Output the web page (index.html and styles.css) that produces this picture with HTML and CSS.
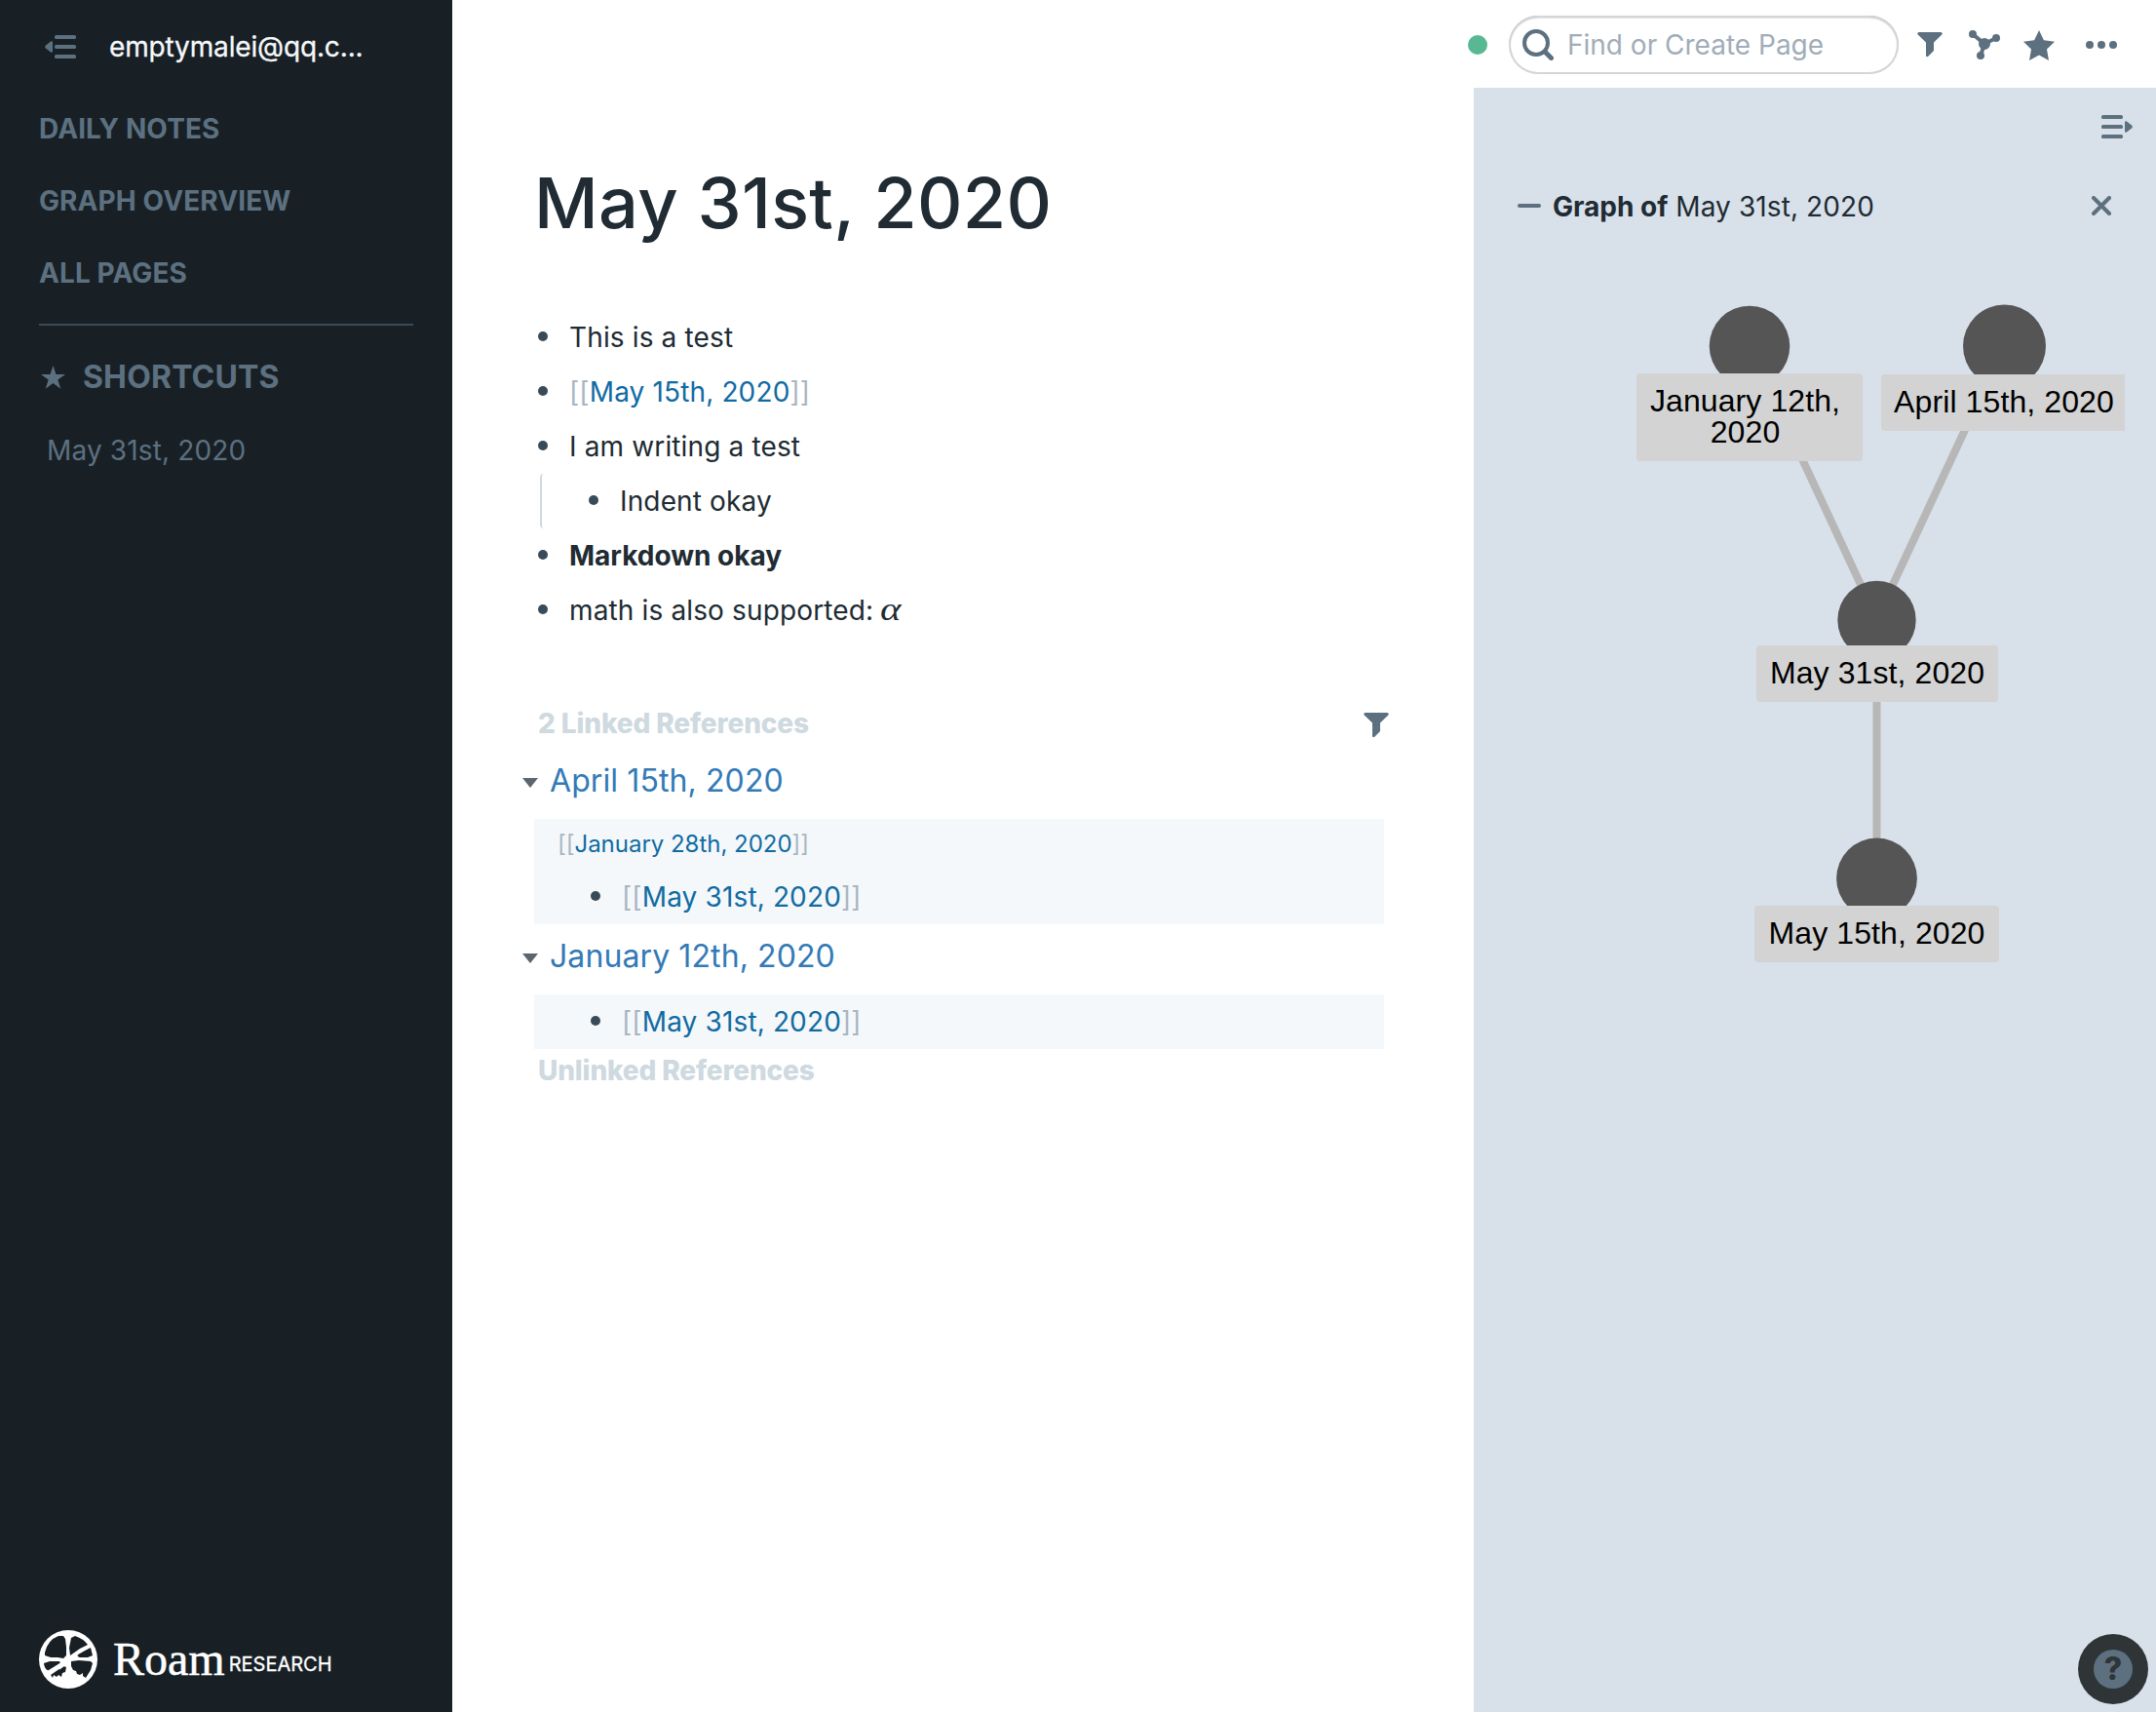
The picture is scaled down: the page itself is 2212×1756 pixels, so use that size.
FILE: index.html
```html
<!DOCTYPE html>
<html lang="en">
<head>
<meta charset="utf-8">
<title>May 31st, 2020</title>
<link rel="stylesheet" href="styles.css">
</head>
<body>
<div class="app">
  <nav class="sidebar">
    <header class="account">
      <svg class="menu-icon" width="32" height="24" viewBox="0 0 32 24"><rect x="10" y="0" width="22" height="4" rx="1.6"/><rect x="10" y="10" width="22" height="4" rx="1.6"/><rect x="10" y="20" width="22" height="4" rx="1.6"/><path d="M8 7.500v9q0 2-2 1L.7 13.200q-1-1.200 0-2.400L6 6.500q2-1 2 1z"/></svg>
      <span class="account-name">emptymalei@qq.c...</span>
    </header>
    <a class="nav-link">DAILY NOTES</a>
    <a class="nav-link">GRAPH OVERVIEW</a>
    <a class="nav-link">ALL PAGES</a>
    <hr class="divider">
    <div class="shortcuts">
      <svg width="25" height="24" viewBox="0 0 25 24"><path d="M12.500 0l3 9H25l-7.700 5.500 3 9.200-7.800-5.700-7.800 5.700 3-9.200L0 9h9.500z"/></svg>
      <span>SHORTCUTS</span>
    </div>
    <a class="shortcut">May 31st, 2020</a>
    <footer class="brand">
      <svg class="brand-mark" width="60" height="60" viewBox="0 0 60 60">
        <circle cx="30" cy="30" r="30" fill="#fff"/>
        <g fill="#182026">
          <path d="M6 23Q9 10 20 6l5 0 2 3 1 8v9l-3 3-6-1-7 0-6-2z"/>
          <path d="M33 8l4-2Q46 9 50 15l-8 4-10 7-1-8z"/>
          <path d="M53 18l2 8-5 2-8 0-5-2z"/>
          <path d="M5 34l6-2 10 0 1 2-12 8Q5 39 5 34z"/>
          <path d="M33 32l8-1 12 1 2 2-2 7-5 8-3-2 0-3-3 2-3-1-1-3-3-1-2-4z"/>
          <path d="M12 46l13-9 3 1-1 5-3 1-1 4-3-2-2 2-3-2-1 3z"/>
        </g>
        <path d="M9 43L51 17" stroke="#fff" stroke-width="2.500"/>
        <path d="M20 39L39 25" stroke="#fff" stroke-width="4"/>
      </svg>
      <span class="brand-name">Roam</span><span class="brand-sub">RESEARCH</span>
    </footer>
  </nav>
  <div class="workspace">
    <header class="topbar">
      <span class="sync-dot"></span>
      <label class="search">
        <svg width="32" height="32" viewBox="0 0 32 32"><circle cx="14" cy="14" r="12" fill="none" stroke="#5c7080" stroke-width="4"/><path d="M23.500 23.500l6 6" stroke="#5c7080" stroke-width="5" stroke-linecap="round"/></svg>
        <span>Find or Create Page</span>
      </label>
      <svg class="tool tool-filter" width="26" height="26" viewBox="0 0 26 26"><path d="M1.500 0h23q2 1 .8 2.500L17 10.500V19l-6 6q-2 .6-2-1V10.500L.7 2.500Q-.5 1 1.500 0z"/></svg>
      <svg class="tool tool-graph" width="32" height="30" viewBox="0 0 32 30"><path d="M4 4l12 10 12-6M16 14l-4 12" fill="none" stroke="#5c7080" stroke-width="4"/><circle cx="4" cy="4" r="4"/><circle cx="28" cy="8" r="4"/><circle cx="12" cy="26" r="4"/><circle cx="16" cy="14" r="6"/></svg>
      <svg class="tool tool-star" width="32" height="31" viewBox="0 0 32 31"><path d="M16 0l4.900 10.200L32 11.800l-8 7.800L26 31l-10-5.400L6 31l2-11.400-8-7.800 11.100-1.600z"/></svg>
      <svg class="tool" width="32" height="8" viewBox="0 0 32 8"><circle cx="4" cy="4" r="4"/><circle cx="16" cy="4" r="4"/><circle cx="28" cy="4" r="4"/></svg>
    </header>
    <div class="panes">
      <main class="page">
        <h1>May 31st, 2020</h1>
        <ul class="blocks">
          <li>This is a test</li>
          <li><span><i>[[</i><a>May 15th, 2020</a><i>]]</i></span></li>
          <li>I am writing a test</li>
          <li class="nested">Indent okay</li>
          <li><b>Markdown okay</b></li>
          <li><span>math is also supported: <em>α</em></span></li>
        </ul>
        <div class="refs-head"><span>2 Linked References</span>
          <svg class="refs-filter" width="26" height="26" viewBox="0 0 26 26"><path d="M1.500 0h23q2 1 .8 2.500L17 10.500V19l-6 6q-2 .6-2-1V10.500L.7 2.500Q-.5 1 1.500 0z"/></svg>
        </div>
        <h2><span class="caret"></span>April 15th, 2020</h2>
        <section class="ref">
          <div class="crumb"><i>[[</i><a>January 28th, 2020</a><i>]]</i></div>
          <div class="ref-block"><span><i>[[</i><a>May 31st, 2020</a><i>]]</i></span></div>
        </section>
        <h2><span class="caret"></span>January 12th, 2020</h2>
        <section class="ref ref-single">
          <div class="ref-block"><span><i>[[</i><a>May 31st, 2020</a><i>]]</i></span></div>
        </section>
        <div class="unlinked">Unlinked References</div>
      </main>
      <aside class="side-panel">
        <svg class="panel-toggle" width="32" height="24" viewBox="0 0 32 24"><rect width="22" height="4" rx="1.600"/><rect y="10" width="22" height="4" rx="1.600"/><rect y="20" width="22" height="4" rx="1.600"/><path d="M24 7.500v9q0 2 2 1l5.300-4.300q1-1.200 0-2.400L26 6.500q-2-1-2 1z"/></svg>
        <div class="panel-title">
          <span class="dash"></span><span class="panel-name"><b>Graph of</b> May 31st, 2020</span>
          <svg width="20" height="20" viewBox="0 0 20 20"><path d="M2 2l16 16M18 2L2 18" stroke="#5c7080" stroke-width="4" stroke-linecap="round"/></svg>
        </div>
        <div class="graph">
          <svg class="edges" width="700" height="760" viewBox="1512 260 700 760">
            <g stroke="#b7b7b7" stroke-width="8"><path d="M1795 355L1925.500 635L2056 355M1925.500 635V900" fill="none"/></g>
            <g fill="#555"><circle cx="1795" cy="355" r="41.300"/><circle cx="2056.500" cy="355" r="42.500"/><circle cx="1925.500" cy="636" r="40.200"/><circle cx="1925.500" cy="901" r="41.400"/></g>
          </svg>
          <div class="node node-january"><span>January 12th,<br>2020</span></div>
          <div class="node node-april">April 15th, 2020</div>
          <div class="node node-center">May 31st, 2020</div>
          <div class="node node-may">May 15th, 2020</div>
        </div>
        <button class="help" aria-label="Help"><span>?</span></button>
      </aside>
    </div>
  </div>
</div>
</body>
</html>
```
FILE: styles.css
```css
* { box-sizing: border-box; }
body { margin: 0; font-family: Inter, sans-serif; font-size: 28px; letter-spacing: 0.14px; color: #202b33; background: #fff; }
.app { display: flex; width: 2212px; height: 1756px; overflow: hidden; }
svg { display: block; flex: none; fill: #5c7080; }
i { font-style: normal; color: #a7b6c2; }
a { color: #106ba3; }
b { font-weight: 700; letter-spacing: 0; }

.sidebar { width: 464px; flex: none; background: #182026; padding: 0 40px; display: flex; flex-direction: column; color: #5c7080; }
.account { height: 96px; display: flex; align-items: center; padding: 0 0 0 6px; }
.account-name { color: #f5f8fa; margin-left: 34px; white-space: nowrap; letter-spacing: -0.15px; -webkit-text-stroke: 0.3px; }
.nav-link { height: 74px; line-height: 72px; font-weight: 700; letter-spacing: 0.1px; color: #5c7080; }
.divider { width: 384px; height: 2px; border: 0; margin: 14px 0 0; background: #394b59; }
.shortcuts { height: 106px; display: flex; align-items: center; gap: 18px; padding-left: 2px; font-size: 32px; font-weight: 700; letter-spacing: 0.15px; }
.shortcuts span { margin-top: -2px; }
.shortcut { height: 46px; line-height: 44px; padding-left: 8px; color: #5c7080; }
.brand { margin-top: auto; height: 84px; display: flex; align-items: flex-start; color: #fff; letter-spacing: 0; }
.brand-name { font-family: "Liberation Serif", serif; font-size: 48px; line-height: 60px; margin-left: 16px; -webkit-text-stroke: 0.5px #fff; }
.brand-sub { font-size: 20px; line-height: 70px; margin-left: 4px; -webkit-text-stroke: 0.3px #fff; }

.workspace { flex: 1; min-width: 0; display: flex; flex-direction: column; }
.topbar { height: 90px; display: flex; align-items: center; justify-content: flex-end; padding: 2px 40px 0 0; letter-spacing: 0; }
.sync-dot { width: 20px; height: 20px; border-radius: 50%; background: #59b893; margin-right: 22px; }
.search { width: 400px; height: 60px; border-radius: 30px; display: flex; align-items: center; gap: 14px; padding-left: 14px; color: #a0adb8; box-shadow: inset 0 0 0 2px #d5d5d5, inset 0 2px 2px #a5a5a5; }
.tool-filter { margin-left: 19px; }
.tool-graph { margin-left: 27px; }
.tool-star { margin: 0 32px 0 24px; }

.panes { flex: 1; display: flex; }
.page { flex: 1; min-width: 0; padding: 74px 86px 0 84px; }
h1 { font-size: 72px; font-weight: 500; line-height: 88px; margin: 0 0 66px; letter-spacing: 0.35px; }
.blocks { list-style: none; margin: 0; padding: 0; }
.blocks li, .ref-block { height: 56px; display: flex; align-items: center; white-space: pre; }
.blocks li::before, .ref-block::before { content: ""; width: 10px; height: 10px; border-radius: 50%; background: #394b59; margin: -2px 22px 0 4px; flex: none; }
.blocks .nested { border-left: 2px solid #ced9e0; border-radius: 4px; margin-left: 6px; padding-left: 44px; }
.blocks em { font-family: "Liberation Serif", serif; font-size: 34px; line-height: 30px; display: inline-block; margin-left: -1px; transform: scaleX(1.2); transform-origin: left; }
.refs-head { margin-top: 62px; height: 52px; display: flex; align-items: center; justify-content: space-between; padding-left: 4px; width: 878px; color: #ced9e0; font-weight: 800; letter-spacing: -0.12px; }
.refs-filter { margin: 4px 1px 0 0; }
h2 { display: flex; align-items: center; height: 64px; margin: 0 0 8px -12px; font-size: 32px; font-weight: 400; letter-spacing: 0.1px; color: #337ab7; }
.caret { border: 8px solid transparent; border-top: 10px solid #5c6670; border-bottom: 0; margin: 5px 12px 0 0; }
.ref { height: 108px; background: #f5f8fa; width: 872px; }
.crumb { height: 52px; line-height: 51px; padding-left: 24px; font-size: 24px; letter-spacing: -0.02px; }
.ref-block { padding-left: 54px; }
.ref-single { height: 56px; }
.unlinked { line-height: 44px; padding-left: 4px; color: #ced9e0; font-weight: 800; letter-spacing: -0.15px; }

.side-panel { width: 700px; flex: none; background: #d8e0e9; display: flex; flex-direction: column; position: relative; }
.panel-toggle { margin: 28px 24px 0 auto; }
.panel-title { height: 70px; margin: 34px 46px 0 45px; display: flex; align-items: center; }
.panel-name { margin-top: 1px; letter-spacing: 0.1px; }
.panel-title svg { margin-left: auto; }
.dash { width: 24px; height: 4px; border-radius: 2px; background: #5c7080; margin-right: 12px; }
.graph { position: relative; height: 760px; margin-top: 14px; font-family: "Liberation Sans", sans-serif; font-size: 32px; line-height: 32px; letter-spacing: 0.1px; color: #000; }
.node { position: absolute; display: flex; justify-content: center; padding-top: 12px; height: 58px; background: #d3d3d3; border-radius: 4px; text-align: center; white-space: nowrap; }
.node-january { left: 167px; top: 123px; width: 232px; height: 90px; padding-right: 9px; }
.node-april { left: 418px; top: 124px; width: 250px; padding-left: 2px; border-radius: 4px 0 0 4px; }
.node-center { left: 290px; top: 402px; width: 248px; }
.node-may { left: 288px; top: 669px; width: 251px; }
.help { position: absolute; left: 620px; bottom: 8px; width: 72px; height: 72px; border: 0; border-radius: 50%; background: #2f3437; display: flex; align-items: center; justify-content: center; padding: 0; }
.help span { width: 40px; height: 40px; border-radius: 50%; background: #5c7080; color: #2f3437; font: 800 32px/40px Inter, sans-serif; }
```
